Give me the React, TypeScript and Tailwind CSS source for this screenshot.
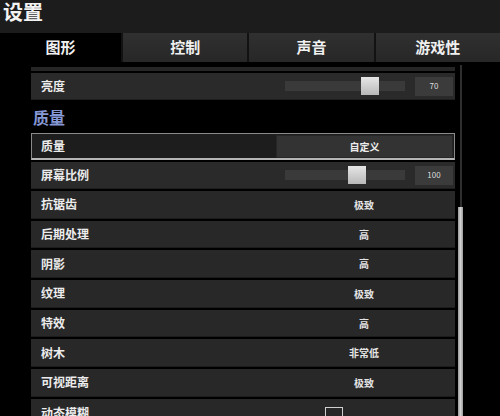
const font = { fontFamily: '"Noto Sans CJK SC", "Noto Sans", sans-serif' }

const tabs = ["图形", "控制", "声音", "游戏性"]

const options = [
  { label: "抗锯齿", value: "极致" },
  { label: "后期处理", value: "高" },
  { label: "阴影", value: "高" },
  { label: "纹理", value: "极致" },
  { label: "特效", value: "高" },
  { label: "树木", value: "非常低" },
  { label: "可视距离", value: "极致" },
]

function SliderRow({ label, thumb, value }: { label: string; thumb: number; value: string }) {
  return (
    <div className="h-[27px] bg-[#2a2a2a] border-b border-[#1f1f1f] flex items-center">
      <span className="pl-[10px] text-[12px] font-bold text-[#ececec] w-[254px]">{label}</span>
      <div className="relative w-[120px] h-[10px] bg-[#3a3a3a]">
        <div
          className="absolute top-[-4px] w-[18px] h-[18px] bg-gradient-to-b from-[#e6e6e6] to-[#b9b9b9]"
          style={{ left: thumb }}
        />
      </div>
      <div className="ml-[10px] w-[38px] h-[19px] bg-[#3b3b3b] flex items-center justify-center text-[8px] text-[#dcdcdc]">
        {value}
      </div>
    </div>
  )
}

function OptionRow({ label, value }: { label: string; value: string }) {
  return (
    <div className="h-[27.7px] bg-[#282828] border-b border-[#1c1c1c] flex items-center">
      <span className="pl-[10px] text-[12px] font-bold text-[#ececec] w-[245px]">{label}</span>
      <span className="w-[176px] text-center text-[10px] font-bold text-[#e4e4e4]">{value}</span>
    </div>
  )
}

export default function App() {
  return (
    <div className="w-[500px] h-[416px] overflow-hidden bg-black" style={font}>
      {/* Header */}
      <div className="h-[33px] bg-[#1c1c1c] flex items-start px-[3px] pt-[1px]">
        <span className="text-[20px] font-bold text-[#f2f2f2] leading-[22px]">设置</span>
      </div>

      {/* Tabs */}
      <div className="h-[29px] flex bg-[#0f0f0f]">
        {tabs.map((t, i) => (
          <div
            key={t}
            className={
              i === 0
                ? "w-[121px] h-full bg-black flex items-center justify-center"
                : "flex-1 h-full bg-gradient-to-b from-[#303030] to-[#272727] border-l-2 border-[#121212] flex items-center justify-center"
            }
          >
            <span className="text-[15px] font-bold text-[#f0f0f0]">{t}</span>
          </div>
        ))}
      </div>

      {/* Content */}
      <div className="flex">
        <div className="w-[31px] shrink-0" />
        <div className="w-[424px] flex flex-col pt-[5px]">
          <div className="h-[4px] bg-[#262626]" />
          <div className="h-[2px]" />
          <SliderRow label="亮度" thumb={76} value="70" />

          <div className="h-[33px] flex items-center pl-[2px]">
            <span className="text-[16px] font-bold text-[#8597d4]">质量</span>
          </div>

          <div className="h-[27px] bg-[#1d1d1d] border border-[#8a8a8a] border-b-2 border-b-[#b5b5b5] flex items-center">
            <span className="pl-[9px] text-[12px] font-bold text-[#ececec] w-[244px]">质量</span>
            <div className="w-[177px] h-[23px] bg-[#333333] border border-[#262626] flex items-center justify-center">
              <span className="text-[10px] font-bold text-[#ececec]">自定义</span>
            </div>
          </div>
          <div className="h-[2px]" />
          <SliderRow label="屏幕比例" thumb={63} value="100" />

          <div className="flex flex-col gap-[2px] mt-[2px]">
            {options.map((o) => (
              <OptionRow key={o.label} label={o.label} value={o.value} />
            ))}
            <div className="h-[27.7px] bg-[#282828] flex items-center">
              <span className="pl-[10px] text-[12px] font-bold text-[#ececec] w-[294px]">动态模糊</span>
              <div className="w-[18px] h-[18px] border border-[#d0d0d0] mt-[6px]" />
            </div>
          </div>
        </div>

        {/* Scrollbar */}
        <div className="w-[8px] ml-[2px] flex flex-col pt-[3px]">
          <div className="h-[142px] w-[2px] ml-[3px] bg-[#2e2e2e]" />
          <div className="h-[220px] w-[5px] ml-[1px] bg-gradient-to-r from-[#9a9a9a] via-[#d2d2d2] to-[#9a9a9a]" />
        </div>
      </div>
    </div>
  )
}
